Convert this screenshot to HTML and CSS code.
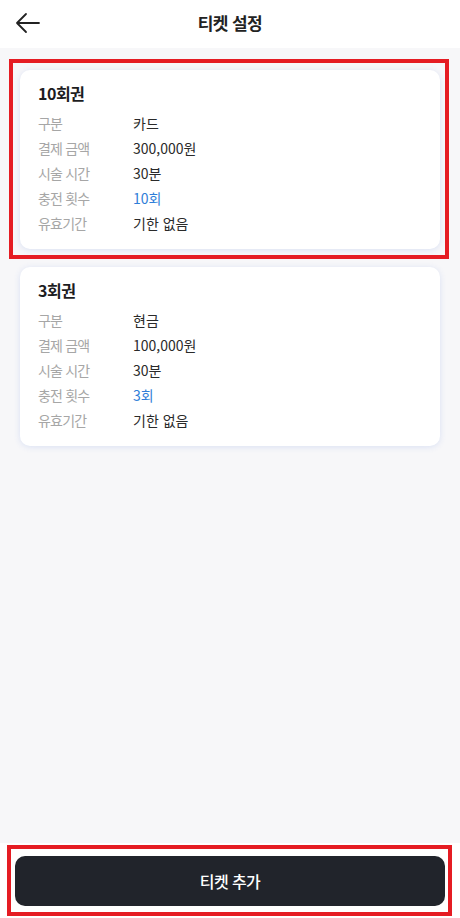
FILE: index.html
```html
<!DOCTYPE html>
<html lang="ko">
<head>
<meta charset="utf-8">
<link rel="stylesheet" href="styles.css">
</head>
<body>
<div class="app">
  <header class="header">
    <button class="back" aria-label="뒤로">
      <svg width="26" height="22" viewBox="0 0 26 22"><path d="M24 11H2M11 2L2 11l9 9" fill="none" stroke="#222" stroke-width="1.8" stroke-linecap="round" stroke-linejoin="round"/></svg>
    </button>
    <h1 class="title">티켓 설정</h1>
  </header>
  <main class="content">
    <div class="card">
      <h2 class="card-title">10회권</h2>
      <div class="row"><span class="label">구분</span><span class="value">카드</span></div>
      <div class="row"><span class="label">결제 금액</span><span class="value">300,000원</span></div>
      <div class="row"><span class="label">시술 시간</span><span class="value">30분</span></div>
      <div class="row"><span class="label">충전 횟수</span><span class="value blue">10회</span></div>
      <div class="row"><span class="label">유효기간</span><span class="value">기한 없음</span></div>
      <div class="mark mark-card"></div>
    </div>
    <div class="card">
      <h2 class="card-title">3회권</h2>
      <div class="row"><span class="label">구분</span><span class="value">현금</span></div>
      <div class="row"><span class="label">결제 금액</span><span class="value">100,000원</span></div>
      <div class="row"><span class="label">시술 시간</span><span class="value">30분</span></div>
      <div class="row"><span class="label">충전 횟수</span><span class="value blue">3회</span></div>
      <div class="row"><span class="label">유효기간</span><span class="value">기한 없음</span></div>
    </div>
  </main>
  <footer class="footer">
    <button class="add">티켓 추가</button>
    <div class="mark mark-btn"></div>
  </footer>
</div>
</body>
</html>
```
FILE: styles.css
```css
* { box-sizing: border-box; }
html, body { margin: 0; padding: 0; }
body {
  font-family: "Noto Sans CJK KR", "Noto Sans", sans-serif;
  background: #f7f7f9;
  color: #222;
}
.app {
  height: 918px;
  display: flex;
  flex-direction: column;
}
.header {
  height: 48px;
  background: #fff;
  display: flex;
  align-items: center;
  justify-content: center;
  position: relative;
}
.back {
  position: absolute;
  left: 15px;
  top: 12px;
  padding: 0;
  border: 0;
  background: none;
  display: flex;
}
.title {
  margin: 0;
  font-size: 17px;
  font-weight: 700;
  letter-spacing: -0.6px;
  color: #222;
  padding-bottom: 4px;
}
.content {
  flex: 1;
  padding: 22px 20px 0;
  display: flex;
  flex-direction: column;
  gap: 18px;
}
.card {
  position: relative;
  background: #fff;
  border-radius: 10px;
  padding: 11px 18px 13px;
  box-shadow: 0 1px 6px rgba(70, 110, 220, 0.16);
}
.card-title {
  margin: 0 0 6px;
  font-size: 16px;
  line-height: 24px;
  font-weight: 700;
  letter-spacing: -0.5px;
  color: #1d1d1f;
}
.row {
  display: flex;
  font-size: 14px;
  line-height: 25px;
}
.label {
  width: 95px;
  color: #a6a6a6;
  letter-spacing: -0.8px;
}
.value {
  color: #2a2a2a;
  letter-spacing: 0;
}
.blue { color: #2f7ed8; }
.footer {
  position: relative;
  height: 75px;
  background: #fff;
  padding: 13px 15px 12px;
}
.add {
  width: 100%;
  height: 50px;
  border: 0;
  border-radius: 10px;
  background: #21242b;
  color: #fff;
  font-family: inherit;
  font-size: 16px;
  font-weight: 500;
  letter-spacing: -0.6px;
}
.mark {
  position: absolute;
  border: 4px solid #e51c23;
  pointer-events: none;
}
.mark-card {
  left: -11px;
  right: -9px;
  top: -11px;
  bottom: -10px;
}
.mark-btn {
  left: 7px;
  right: 8px;
  top: 2px;
  bottom: 2px;
}
```
